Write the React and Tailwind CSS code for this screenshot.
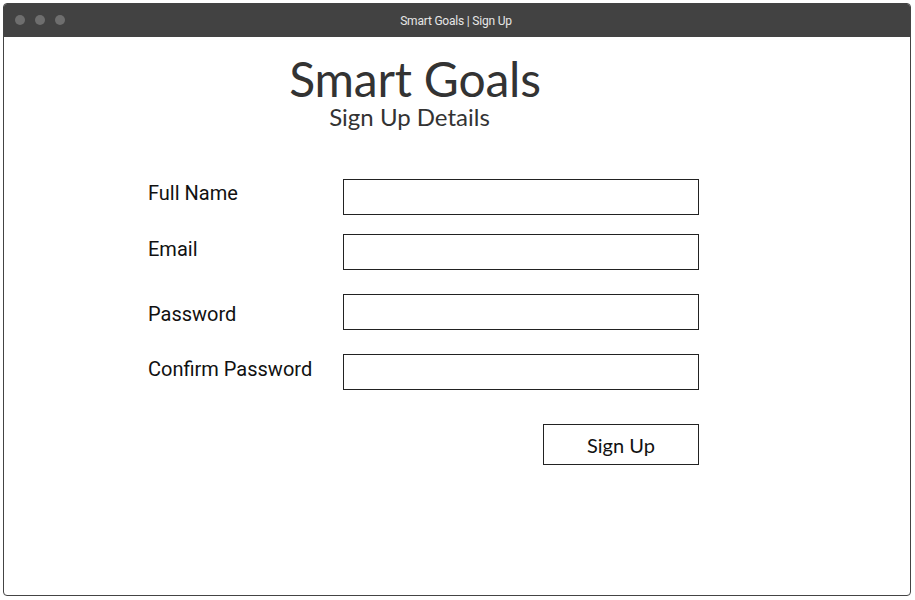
export default function App() {
  const fields = [
    { label: "Full Name", name: "full_name", type: "text", labelTop: "mt-0", rowGap: "" },
    { label: "Email", name: "email", type: "email", labelTop: "mt-[1px]", rowGap: "mt-[19px]" },
    { label: "Password", name: "password", type: "password", labelTop: "mt-[6px]", rowGap: "mt-6" },
    { label: "Confirm Password", name: "confirm_password", type: "password", labelTop: "mt-[1px]", rowGap: "mt-6" },
  ];

  return (
    <div className="w-[915px] h-[600px] bg-white p-[3px] pb-[4px] pr-[4px]">
      <div className="h-full flex flex-col border border-[#444] rounded-[4px] overflow-hidden">
        {/* title bar */}
        <div className="relative h-[33px] bg-[#424242] flex items-center justify-center shrink-0">
          <div className="absolute left-[11px] top-[11px] flex gap-[10px]">
            <span className="w-[10px] h-[10px] rounded-full bg-[#6e6e6e]" />
            <span className="w-[10px] h-[10px] rounded-full bg-[#6e6e6e]" />
            <span className="w-[10px] h-[10px] rounded-full bg-[#6e6e6e]" />
          </div>
          <span className="text-[12px] text-[#e6e6e6] font-['Roboto',sans-serif] ml-[-2px] tracking-[-0.2px]">
            Smart Goals | Sign Up
          </span>
        </div>

        {/* content */}
        <div className="flex-1 pl-[144px] font-['Roboto',sans-serif]">
          <div className="ml-[141px] w-[252px] flex flex-col items-center font-['Lato',sans-serif] text-[#333]">
            <h1 className="text-[48px] leading-[46px] mt-[19px] tracking-[-0.2px]">Smart Goals</h1>
            <h2 className="text-[24px] leading-[24px] mt-[3px] pr-[11px]">Sign Up Details</h2>
          </div>

          <form className="mt-[50px] w-[556px]" onSubmit={(e) => e.preventDefault()}>
            {fields.map((f) => (
              <div key={f.name} className={`flex ${f.rowGap}`}>
                <label
                  htmlFor={f.name}
                  className={`w-[195px] text-[20px] leading-[28px] text-[#111] ${f.labelTop}`}
                >
                  {f.label}
                </label>
                <input
                  id={f.name}
                  name={f.name}
                  type={f.type}
                  className="w-[356px] h-[36px] border border-[#222] bg-white outline-none px-2"
                />
              </div>
            ))}

            <div className="flex justify-end mt-[34px] pr-[5px]">
              <button
                type="submit"
                className="w-[156px] h-[41px] border border-[#222] bg-white text-[20px] text-[#111] font-['Lato',sans-serif]"
              >
                Sign Up
              </button>
            </div>
          </form>
        </div>
      </div>
    </div>
  );
}
